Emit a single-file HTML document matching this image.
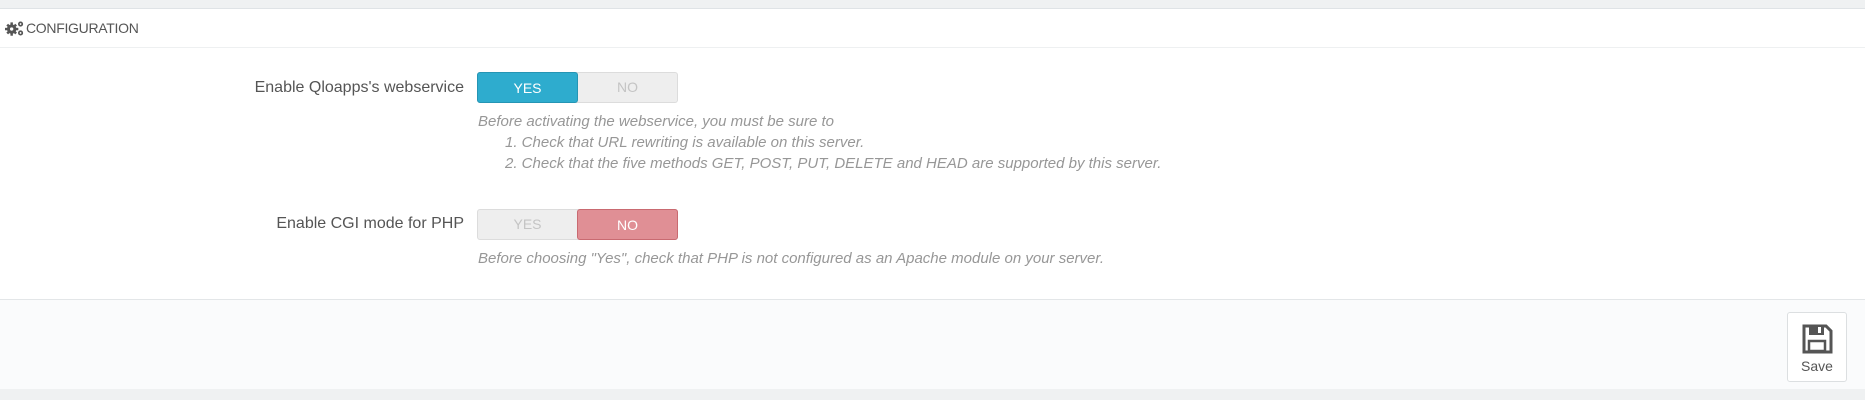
<!DOCTYPE html>
<html><head><meta charset="utf-8"><style>
*{box-sizing:border-box;margin:0;padding:0}
body{width:1865px;height:400px;background:#eff1f2;font-family:"Liberation Sans",sans-serif;position:relative;overflow:hidden}
.panel{position:absolute;left:0;top:8px;width:1865px;height:381px;background:#fff;border-top:1px solid #dfe3e6;border-bottom:1px solid #d5d9dc}
.head{position:absolute;left:0;top:0;width:100%;height:39px;border-bottom:1px solid #eef0f1;color:#555;font-size:14px;line-height:39px;padding-left:26px;letter-spacing:-.3px}
.lbl{position:absolute;right:calc(1865px - 464px);font-size:16px;color:#555;white-space:nowrap}
.tg{position:absolute;left:477px;width:201px;height:31px;border-radius:3px;background:#eeeeee;border:1px solid #dcdcdc;font-size:14px}
.tg span{position:absolute;top:-1px;height:31px;width:101px;line-height:31px;text-align:center;color:#c4c4c4}
.tg .y{left:-1px}.tg .n{left:99px}
.tg .on1{background:#2eacce;border:1px solid #2595b4;color:#fff;border-radius:3px}
.tg .on2{background:#e08f95;border:1px solid #c96a71;color:#fff;border-radius:3px}
.help{position:absolute;left:478px;font-size:15px;font-style:italic;color:#979797;white-space:nowrap;line-height:21px}
.foot{position:absolute;left:0;top:290px;width:100%;height:90px;background:#fafbfc;border-top:1px solid #e3e6e8}
.save{position:absolute;left:1787px;top:12px;width:60px;height:70px;border:1px solid #dcdfe1;border-radius:3px;background:#fff;text-align:center;font-size:14px;color:#555}
</style></head><body>
<div class="panel">
<div class="head"><svg style="position:absolute;left:5px;top:11px" width="20" height="17" viewBox="0 0 18 15"><g fill="#555"><circle cx="6" cy="8" r="4.2"/><g stroke="#555" stroke-width="2.2"><line x1="6" y1="2" x2="6" y2="14"/><line x1="0" y1="8" x2="12" y2="8"/><line x1="2" y1="4" x2="10" y2="12"/><line x1="10" y1="4" x2="2" y2="12"/></g><circle cx="6" cy="8" r="1.5" fill="#fff"/><circle cx="14" cy="3.5" r="2.3"/><circle cx="14" cy="11.5" r="2.3"/></g><circle cx="14" cy="3.5" r=".8" fill="#fff"/><circle cx="14" cy="11.5" r=".8" fill="#fff"/></svg>CONFIGURATION</div>
<div class="lbl" style="top:70px">Enable Qloapps's webservice</div>
<div class="tg" style="top:63px"><span class="y on1">YES</span><span class="n">NO</span></div>
<div class="help" style="top:102px">Before activating the webservice, you must be sure to<br><span style="padding-left:27px">1. Check that URL rewriting is available on this server.</span><br><span style="padding-left:27px">2. Check that the five methods GET, POST, PUT, DELETE and HEAD are supported by this server.</span></div>
<div class="lbl" style="top:206px">Enable CGI mode for PHP</div>
<div class="tg" style="top:200px"><span class="y">YES</span><span class="n on2">NO</span></div>
<div class="help" style="top:239px">Before choosing "Yes", check that PHP is not configured as an Apache module on your server.</div>
<div class="foot"><div class="save"><svg style="display:block;margin:10px auto 3px" width="32" height="32" viewBox="0 0 32 32"><path d="M3 3h22l5 5v21H3z" fill="none" stroke="#555" stroke-width="3"/><rect x="8" y="3" width="15" height="9" fill="#555"/><rect x="17" y="4" width="3" height="6" fill="#fff"/><rect x="8" y="18" width="16" height="10" fill="none" stroke="#555" stroke-width="2.5"/></svg>Save</div></div>
</div>
</body></html>
